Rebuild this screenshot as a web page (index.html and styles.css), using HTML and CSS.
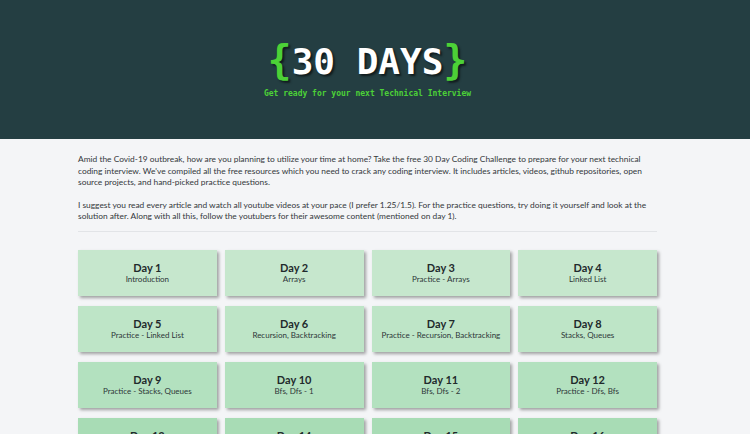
FILE: index.html
```html
<!DOCTYPE html>
<html>
<head>
<meta charset="utf-8">
<link rel="stylesheet" href="styles.css">
</head>
<body>
<header class="hero">
  <h1 class="title"><span class="brace">{</span>30 DAYS<span class="brace">}</span></h1>
  <p class="tagline">Get ready for your next Technical Interview</p>
</header>
<main class="content">
  <p class="intro">Amid the Covid-19 outbreak, how are you planning to utilize your time at home? Take the free 30 Day Coding Challenge to prepare for your next technical coding interview. We've compiled all the free resources which you need to crack any coding interview. It includes articles, videos, github repositories, open source projects, and hand-picked practice questions.</p>
  <p class="intro">I suggest you read every article and watch all youtube videos at your pace (I prefer 1.25/1.5). For the practice questions, try doing it yourself and look at the solution after. Along with all this, follow the youtubers for their awesome content (mentioned on day 1).</p>
  <hr class="divider">
  <div class="grid">
    <div class="card r1"><div class="day">Day 1</div><div class="topic">Introduction</div></div>
    <div class="card r1"><div class="day">Day 2</div><div class="topic">Arrays</div></div>
    <div class="card r1"><div class="day">Day 3</div><div class="topic">Practice - Arrays</div></div>
    <div class="card r1"><div class="day">Day 4</div><div class="topic">Linked List</div></div>
    <div class="card r2"><div class="day">Day 5</div><div class="topic">Practice - Linked List</div></div>
    <div class="card r2"><div class="day">Day 6</div><div class="topic">Recursion, Backtracking</div></div>
    <div class="card r2"><div class="day">Day 7</div><div class="topic">Practice - Recursion, Backtracking</div></div>
    <div class="card r2"><div class="day">Day 8</div><div class="topic">Stacks, Queues</div></div>
    <div class="card r3"><div class="day">Day 9</div><div class="topic">Practice - Stacks, Queues</div></div>
    <div class="card r3"><div class="day">Day 10</div><div class="topic">Bfs, Dfs - 1</div></div>
    <div class="card r3"><div class="day">Day 11</div><div class="topic">Bfs, Dfs - 2</div></div>
    <div class="card r3"><div class="day">Day 12</div><div class="topic">Practice - Dfs, Bfs</div></div>
    <div class="card r4"><div class="day">Day 13</div><div class="topic">Trees</div></div>
    <div class="card r4"><div class="day">Day 14</div><div class="topic">Practice - Trees</div></div>
    <div class="card r4"><div class="day">Day 15</div><div class="topic">Binary Search Trees</div></div>
    <div class="card r4"><div class="day">Day 16</div><div class="topic">Practice - BST</div></div>
  </div>
</main>
</body>
</html>
```
FILE: styles.css
```css
html, body {
  margin: 0;
  padding: 0;
}
body {
  background: #f4f5f7;
  font-family: "Lato", "Open Sans", sans-serif;
  color: #2b2f33;
  overflow: hidden;
}
.hero {
  background: #243e42;
  height: 139px;
  padding-right: 15px;
  display: flex;
  flex-direction: column;
  align-items: center;
  box-sizing: border-box;
  padding-top: 38px;
}
.title {
  margin: 0;
  font-family: "DejaVu Sans Mono", monospace;
  font-weight: bold;
  font-size: 36px;
  line-height: 44px;
  color: #ffffff;
  text-shadow: 2px 2px 2px #111c1e;
}
.brace {
  color: #4cd137;
  font-size: 40px;
}
.tagline {
  margin: 5px 0 0;
  font-family: "DejaVu Sans Mono", monospace;
  font-weight: bold;
  font-size: 8px;
  color: #4cd137;
}
.content {
  width: 579px;
  margin-left: 78px;
  padding-top: 15px;
  display: flex;
  flex-direction: column;
}
.intro {
  margin: 0 0 11px;
  font-size: 8.4px;
  line-height: 11.5px;
  color: #33373b;
}
.divider {
  align-self: stretch;
  border: 0;
  border-top: 1px solid #e2e4e7;
  margin: -3px 0 18px;
}
.grid {
  display: grid;
  grid-template-columns: repeat(4, 1fr);
  column-gap: 8px;
  row-gap: 10px;
}
.card {
  height: 46px;
  display: flex;
  flex-direction: column;
  align-items: center;
  justify-content: center;
  box-shadow: 2px 2px 3px rgba(0, 0, 0, 0.35);
  color: #1f2a2c;
}
.r1 { background: #c6e7cd; }
.r2 { background: #bee5c7; }
.r3 { background: #b3e1bf; }
.r4 { background: #a8dcb5; }
.day {
  font-size: 11px;
  font-weight: 700;
  line-height: 13px;
}
.topic {
  font-size: 8px;
  font-weight: 400;
  line-height: 11px;
  color: #2d3638;
}
```
